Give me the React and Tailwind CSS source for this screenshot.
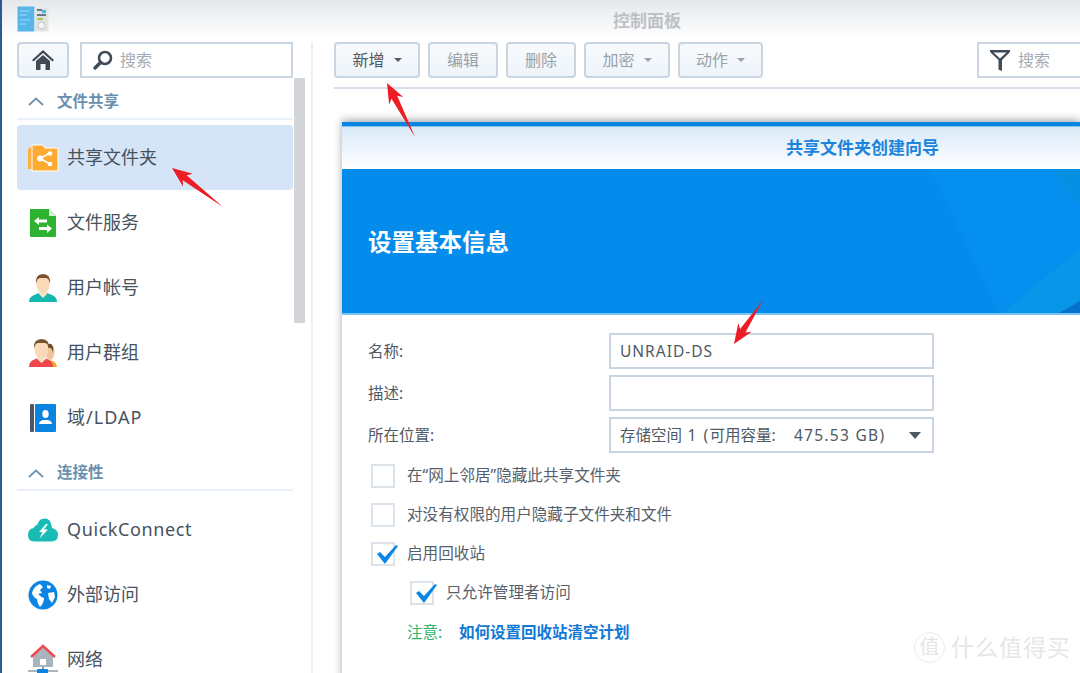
import React from "react";

const arrows = [
  { tip: [172, 168], tail: [223, 207] },
  { tip: [387, 83], tail: [415, 137] },
  { tip: [734, 344], tail: [763, 300] },
];

// arrow drawn from tip to tail: head with barbs, then thin taper
const arrowPoints = ({ tip, tail }) => {
  const dx = tail[0] - tip[0];
  const dy = tail[1] - tip[1];
  const len = Math.hypot(dx, dy);
  const ux = dx / len;
  const uy = dy / len;
  const at = (along, side) => `${tip[0] + ux * along - uy * side},${tip[1] + uy * along + ux * side}`;
  return [at(0, 0), at(20, 8), at(16, 3.2), at(len, 0), at(16, -3.2), at(20, -8)].join(" ");
};

const FolderIcon = () => (
  <svg width="32" height="30" viewBox="0 0 32 30">
    <path d="M1 6 L5 3 V26 H1 Z" fill="#fbb040" />
    <path d="M5 2 H16 L18 5 H30 Q31 5 31 6 V27 Q31 28 30 28 H5 Z" fill="#ffab33" stroke="#fff" strokeWidth="1" />
    <path d="M23 10 L13 15.5 L23 21" fill="none" stroke="#fff" strokeWidth="1.6" />
    <circle cx="13" cy="15.5" r="3" fill="#fff" />
    <circle cx="23" cy="10.5" r="2.3" fill="#fff" />
    <circle cx="23" cy="21" r="2.3" fill="#fff" />
  </svg>
);

const FileServiceIcon = () => (
  <svg width="28" height="30" viewBox="0 0 28 30">
    <path d="M1 1 H20 L27 8 V28 Q27 29 26 29 H2 Q1 29 1 28 Z" fill="#2db32f" />
    <path d="M20 1 L27 8 H20 Z" fill="#d8f3d8" />
    <path d="M5 13 L10 9 V11.5 H18 V14.5 H10 V17 Z" fill="#fff" />
    <path d="M23 20.5 L18 16.5 V19 H10 V22 H18 V25 Z" fill="#fff" />
  </svg>
);

const UserIcon = () => (
  <svg width="30" height="30" viewBox="0 0 30 30">
    <path d="M1 29 Q1 24 6 22 L11 20 H19 L24 22 Q29 24 29 29 Z" fill="#14b8ae" />
    <path d="M11 18 H19 V21 L15 25 L11 21 Z" fill="#fbe3c8" />
    <ellipse cx="15" cy="11" rx="6.5" ry="9.5" fill="#fad9b8" />
    <path d="M8 11 Q7 1 15 1 Q23 1 22 11 Q21 5 18 5 H12 Q9 5 8 11 Z" fill="#7a5230" />
  </svg>
);

const GroupIcon = () => (
  <svg width="30" height="30" viewBox="0 0 30 30">
    <path d="M20 22 Q28 22 29 29 H20 Z" fill="#f5a623" />
    <ellipse cx="22" cy="14" rx="4.5" ry="8" fill="#f2c49b" />
    <path d="M19 9 Q20 5 23 6 Q26 8 25 15 Q24 10 22 10 Z" fill="#6f4a2a" />
    <path d="M1 29 Q1 24 5 22 L10 20 H17 L21 22 Q25 24 25 29 Z" fill="#f0464e" />
    <path d="M9 18 H18 V21 L13.5 25 L9 21 Z" fill="#fbe3c8" />
    <ellipse cx="13.5" cy="11" rx="7" ry="9.5" fill="#fad9b8" />
    <path d="M6 11 Q5 1 13.5 1 Q22 1 21 11 Q20 5 17 5 H10 Q7 5 6 11 Z" fill="#7a5230" />
  </svg>
);

const LdapIcon = () => (
  <svg width="28" height="30" viewBox="0 0 28 30">
    <rect x="1" y="1" width="4" height="28" rx="1" fill="#4a5663" />
    <rect x="6" y="1" width="21" height="28" rx="1" fill="#0a84e0" />
    <ellipse cx="16.5" cy="11" rx="3.2" ry="4" fill="#fff" />
    <path d="M10 21 Q10 18 14 17 H19 Q23 18 23 21 Z" fill="#fff" />
  </svg>
);

const CloudIcon = () => (
  <svg width="30" height="24" viewBox="0 0 30 24">
    <path d="M6 23.5 Q0 23.5 0 17 Q0 11 5.5 10 Q7 7 9.5 6.5 Q11 0.5 16.5 0.5 Q22 0.5 23 6 Q24 9 24 10 Q30 11.5 30 17 Q30 23.5 23 23.5 Z" fill="#18bcb5" />
    <path d="M18 6 L11 14 H14.5 L11.5 20.5 L20 11.5 H16 L20 6 Z" fill="#fff" />
  </svg>
);

const GlobeIcon = () => (
  <svg width="30" height="30" viewBox="0 0 30 30">
    <circle cx="15" cy="15" r="14.5" fill="#0b84e3" />
    <path d="M4 13 Q6 6 12 4 L15 7 L12 10 L14 13 L10 14 Q13 17 16 18 Q16 23 12 27 Q9 23 9 19 Q5 17 4 13 Z" fill="#fff" />
    <path d="M19 5 L23 6 L22 9 L19 8 Z M20 13 L26 12 L27 17 L24 23 L21 19 Z" fill="#fff" />
  </svg>
);

const NetworkIcon = () => (
  <svg width="30" height="31" viewBox="0 0 30 31">
    <path d="M5 12 L15 3 L25 12 V23 H5 Z" fill="#aab4bd" />
    <rect x="12" y="15" width="6" height="6" fill="#fff" />
    <path d="M3 13 L15 2 L27 13" fill="none" stroke="#f0484e" strokeWidth="2.4" />
    <rect x="14" y="23" width="2" height="4" fill="#8d99a5" />
    <rect x="0" y="26" width="30" height="2" fill="#aab4bd" />
    <rect x="9" y="25" width="11" height="6" rx="1" fill="#0b84e3" />
  </svg>
);

const AppIcon = () => (
  <svg width="32" height="27" viewBox="0 0 32 27">
    <rect x="0.5" y="0.5" width="17" height="25" fill="#56b6ea" />
    <rect x="17.5" y="2" width="14" height="23.5" fill="#e2e4e4" />
    <path d="M3 5 H13 M3 9 H10 M3 14 H13 M3 18 H9" stroke="#9fdcf6" strokeWidth="1" />
    <rect x="20" y="3" width="5" height="2" fill="#6d7780" />
    <rect x="25" y="4" width="4" height="3" fill="#43b4e8" />
    <rect x="20" y="8" width="9" height="2" fill="#6d7780" />
    <rect x="20" y="12" width="6" height="2" fill="#98cf4e" />
    <circle cx="24.5" cy="19.5" r="3.5" fill="#f3f5f5" stroke="#bcc2c6" />
  </svg>
);

const HomeIcon = () => (
  <svg width="22" height="20" viewBox="0 0 22 20">
    <path d="M11 0 L22 10 L20.5 11.5 L11 3 L1.5 11.5 L0 10 Z" fill="#414b55" />
    <path d="M4 11 L11 5 L18 11 V20 H13.5 V14 H8.5 V20 H4 Z" fill="#414b55" />
  </svg>
);

const SearchIcon = () => (
  <svg width="20" height="20" viewBox="0 0 20 20">
    <circle cx="12" cy="8" r="6" fill="none" stroke="#414b55" strokeWidth="2.6" />
    <path d="M7.5 12.5 L2 18" stroke="#414b55" strokeWidth="3.4" strokeLinecap="round" />
  </svg>
);

const FilterIcon = () => (
  <svg width="20" height="21" viewBox="0 0 20 21">
    <path d="M0 0 H20 V2 L12 10 V21 L8.5 19.5 V10 L0 2 Z M3.5 2.5 L10 8.5 L16.5 2.5 Z" fill="#414b55" fillRule="evenodd" />
  </svg>
);

const Chevron = () => (
  <svg width="16" height="9" viewBox="0 0 16 9">
    <path d="M1 8 L8 1.5 L15 8" fill="none" stroke="#6d93b3" strokeWidth="1.8" />
  </svg>
);

const Caret = ({ dim }) => (
  <span className={`h-0 w-0 border-x-4 border-t-4 border-x-transparent ${dim ? "border-t-[#9aa3ad]" : "border-t-[#505a64]"}`} />
);

const Check = () => (
  <svg className="absolute left-[2px] -top-[1px]" width="24" height="22" viewBox="0 0 24 22">
    <path d="M2 11 L5 9 L10 14 L21 2 L23 3 L10 21 Z" fill="#0a86e4" />
  </svg>
);

const SectionHeader = ({ label, className }) => (
  <div className={`flex items-center border-b-2 border-[#e9f0f7] pl-[11px] ${className}`}>
    <Chevron />
    <span className="ml-[13px] text-[15.5px] font-bold text-[#6a8fae]">{label}</span>
  </div>
);

const NavItem = ({ icon, label, active, latin }) => (
  <div className={`flex h-[65px] items-center rounded-[4px] ${active ? "bg-[#d5e5f7]" : ""}`}>
    <div className="flex w-[50px] justify-center pl-[2px]">{icon}</div>
    <span className={`text-[18px] text-[#46525e] ${latin || ""}`}>{label}</span>
  </div>
);

const ToolButton = ({ label, width, caret, dim }) => (
  <button
    className={`flex h-[36px] shrink-0 items-center justify-center gap-[9px] rounded-[4px] border-2 border-[#c9d5e1] bg-gradient-to-b from-[#f8fbfd] to-[#eef4fa] text-[16px] ${width} ${dim ? "text-[#9ba2a9]" : "text-[#4f5963]"}`}
  >
    {label}
    {caret && <Caret dim={dim} />}
  </button>
);

const FormRow = ({ label, children }) => (
  <div className="flex h-[35px] items-center">
    <span className="w-[241px] pt-[2px] text-[15.5px] text-[#4f5963]">{label}</span>
    {children}
  </div>
);

const CheckRow = ({ label, checked, indent }) => (
  <div className={`flex h-[39px] items-center ${indent ? "pl-[42px]" : "pl-[3px]"}`}>
    <span className="relative h-[24px] w-[24px] shrink-0 border-2 border-[#dde3ea] bg-white">{checked && <Check />}</span>
    <span className="ml-[12px] text-[15.6px] text-[#56606a]">{label}</span>
  </div>
);

export default function App() {
  return (
    <div className="relative h-[673px] w-[1080px] overflow-hidden border-l-2 border-[#2c5a92] bg-white font-['Noto_Sans','Noto_Sans_CJK_SC',sans-serif]">
      {/* Title bar */}
      <div className="relative h-[38px] bg-gradient-to-b from-[#e5e8eb] to-white pl-[15px] pt-[6px]">
        <AppIcon />
        <span className="absolute left-[611px] top-[8px] text-[17px] font-bold text-[#bdc1c5]">控制面板</span>
      </div>

      <div className="flex">
        {/* Sidebar */}
        <aside className="relative mt-[4px] h-[631px] w-[311px] shrink-0 border-r-2 border-[#eceef0] pl-[15px]">
          <div className="w-[276px]">
            <div className="flex gap-[11px]">
              <button className="flex h-[36px] w-[52px] items-center justify-center rounded-[4px] border-2 border-[#c9d5e1] bg-gradient-to-b from-[#f8fbfd] to-[#eef4fa]">
                <HomeIcon />
              </button>
              <div className="flex h-[36px] flex-1 items-center border-2 border-[#c9d5e1] pl-[11px]">
                <SearchIcon />
                <span className="ml-[7px] text-[16px] text-[#a5abb2]">搜索</span>
              </div>
            </div>

            <SectionHeader label="文件共享" className="mt-[5px] h-[37px] pt-[2px]" />
            <div className="mt-[5px]">
              <NavItem active icon={<FolderIcon />} label="共享文件夹" />
              <NavItem icon={<FileServiceIcon />} label="文件服务" />
              <NavItem icon={<UserIcon />} label="用户帐号" />
              <NavItem icon={<GroupIcon />} label="用户群组" />
              <NavItem icon={<LdapIcon />} label="域/LDAP" latin="tracking-[1px]" />
            </div>

            <SectionHeader label="连接性" className="mt-[7px] h-[34px]" />
            <div className="mt-[6px]">
              <NavItem icon={<CloudIcon />} label="QuickConnect" latin="tracking-[0.6px]" />
              <NavItem icon={<GlobeIcon />} label="外部访问" />
              <NavItem icon={<NetworkIcon />} label="网络" />
            </div>
          </div>
          {/* Scrollbar thumb */}
          <div className="absolute left-[292px] top-[36px] h-[245px] w-[11px] bg-[#d3d5d8]" />
        </aside>

        {/* Main */}
        <main className="min-w-0 flex-1 pl-[21px] pt-[4px]">
          <div className="flex h-[47px] gap-[8px] border-b-2 border-[#d5dfe9]">
            <ToolButton label="新增" width="w-[86px]" caret />
            <ToolButton label="编辑" width="w-[70px]" dim />
            <ToolButton label="删除" width="w-[70px]" dim />
            <ToolButton label="加密" width="w-[86px]" caret dim />
            <ToolButton label="动作" width="w-[85px]" caret dim />
            <div className="ml-[206px] flex h-[36px] w-[120px] shrink-0 items-center border-2 border-[#c9d5e1] pl-[11px]">
              <FilterIcon />
              <span className="ml-[8px] text-[16px] text-[#a5abb2]">搜索</span>
            </div>
          </div>

          {/* Wizard dialog */}
          <div className="ml-[8px] mt-[33px] h-[560px] shadow-[0_-2px_8px_rgba(60,60,70,0.45)]">
            <div className="h-[5px] border-b border-[#7cc2f2] bg-[#0586e2]" />
            <div className="flex h-[42px] items-center bg-gradient-to-b from-[#d9eaf8] to-white pb-[1px] pl-[444px]">
              <span className="text-[17px] font-bold text-[#1c84dc]">共享文件夹创建向导</span>
            </div>
            <div className="relative flex h-[146px] items-center overflow-hidden border-b-2 border-[#7cc2f2] bg-[#038ceb] pl-[26px] pt-[3px]">
              <svg className="absolute right-0 top-0" width="370" height="146" viewBox="0 0 370 146">
                <path d="M220 0 H370 V146 H290 Z" fill="#058fef" />
                <path d="M340 0 L370 36 V0 Z" fill="#0590e4" />
                <path d="M370 80 V146 H290 Z" fill="#0897e8" />
                <path d="M370 132 V146 H345 Z" fill="#0671cc" />
              </svg>
              <h1 className="relative text-[23.5px] font-bold text-white">设置基本信息</h1>
            </div>

            <div className="pl-[26px] pt-[18px]">
              <div className="flex flex-col gap-[7px]">
                <FormRow label="名称:">
                  <div className="flex h-[36px] w-[325px] items-center border-2 border-[#c9d5e1] pl-[9px] pt-[2px] text-[15.5px] tracking-[1px] text-[#4f5963]">UNRAID-DS</div>
                </FormRow>
                <FormRow label="描述:">
                  <div className="h-[36px] w-[325px] border-2 border-[#c9d5e1]" />
                </FormRow>
                <FormRow label="所在位置:">
                  <div className="flex h-[36px] w-[325px] items-center justify-between border-2 border-[#c9d5e1] pl-[9px] pr-[11px] pt-[2px] text-[15.5px] text-[#4f5963]">
                    <span className="whitespace-pre">
                      存储空间<span className="tracking-[1.5px]"> 1 (</span>可用容量:    <span className="ml-[2px] tracking-[1.3px]">475.53 GB)</span>
                    </span>
                    <span className="h-0 w-0 border-x-[6px] border-t-[7px] border-x-transparent border-t-[#4f5963]" />
                  </div>
                </FormRow>
              </div>
              <div className="mt-[4px]">
                <CheckRow label="在“网上邻居”隐藏此共享文件夹" />
                <CheckRow label="对没有权限的用户隐藏子文件夹和文件" />
                <CheckRow checked label="启用回收站" />
                <CheckRow checked indent label="只允许管理者访问" />
              </div>
              <div className="flex h-[39px] items-center pl-[39px] pt-[2px] text-[15.5px]">
                <span className="w-[52px] text-[#2fb36e]">注意:</span>
                <span className="font-bold text-[#1079d6]">如何设置回收站清空计划</span>
              </div>
            </div>
          </div>
        </main>
      </div>

      {/* Annotation arrows, in page coordinates */}
      <svg className="pointer-events-none absolute -left-[2px] top-0" width="1080" height="673">
        {arrows.map((a) => (
          <polygon key={a.tip.join()} points={arrowPoints(a)} fill="#ee1c25" />
        ))}
      </svg>

      {/* Watermark */}
      <div className="pointer-events-none absolute left-[912px] top-[630px] flex items-center gap-[6px] text-[#e6e6e6]">
        <span className="flex h-[31px] w-[31px] items-center justify-center rounded-full border border-[#ececec] text-[20px]">值</span>
        <span className="text-[23px] tracking-[1px]">什么值得买</span>
      </div>
    </div>
  );
}
